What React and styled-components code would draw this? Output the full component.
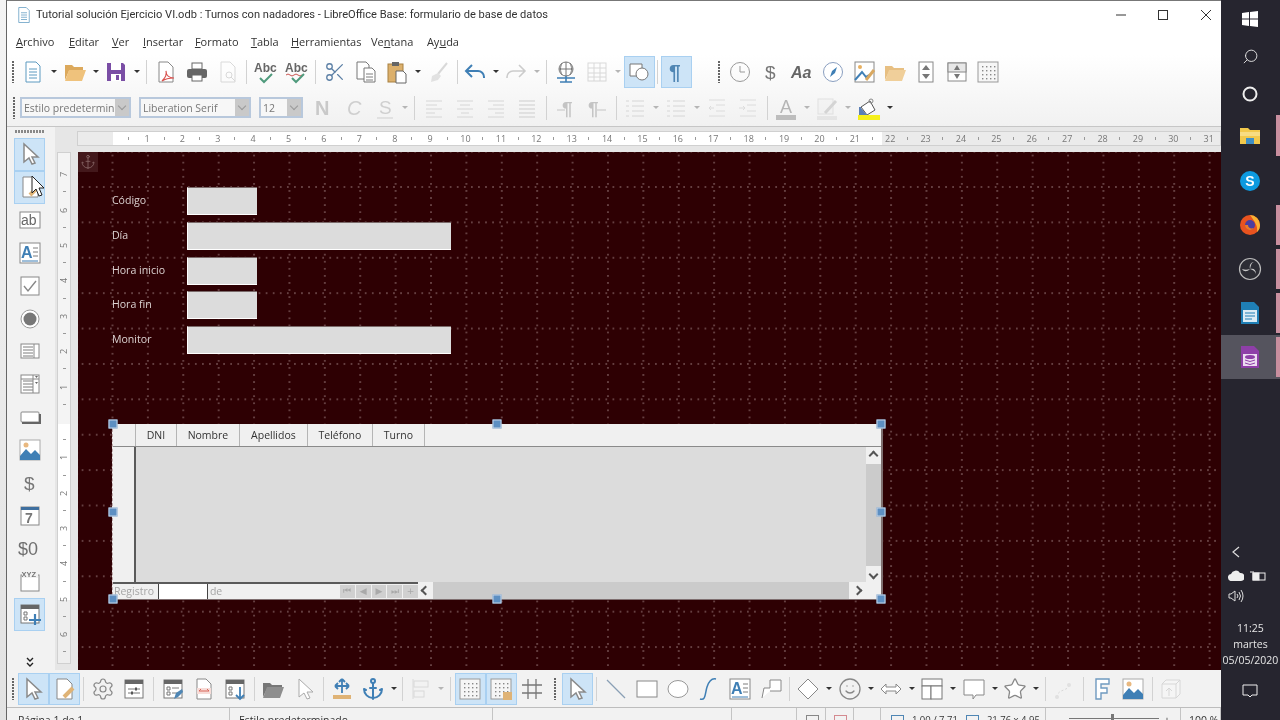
import React from "react";
import styled, { createGlobalStyle } from "styled-components";
import { Settings, Smile, Star, Scissors, Anchor, Search } from "lucide-react";

const Global = createGlobalStyle`
  html, body { margin: 0; padding: 0; background: #f2f2f2; }
  body { font-family: "Open Sans", "Liberation Sans", sans-serif; color: #333; }
`;

const G = "#7d7d7d";
const B = "#3f7fb5";
const T = { fontFamily: "Liberation Sans, sans-serif" };
const PALE = "#d6d6d6";

const lines = (x1, x2, ys, c = G) => ys.map((y) => <path key={y} d={`M${x1} ${y}H${x2}`} stroke={c} />);
const rows = (spans, c = PALE) => spans.map(([a, b], i) => <path key={i} d={`M${a} ${5 + i * 4}H${b}`} stroke={c} />);
const dots = (c = "#888") => {
  const out = [];
  for (let x = 6; x < 20; x += 4) for (let y = 6; y < 20; y += 4) out.push(<rect key={`${x}${y}`} x={x} y={y} width="1.4" height="1.4" fill={c} />);
  return out;
};
const win = (c = "#777") => (
  <>
    <rect x="3" y="3" width="18" height="18" fill="#fff" stroke={c} />
    <rect x="3" y="3" width="18" height="4" fill="#666" />
  </>
);

const icons = {
  new: <><path d="M5 2h10l4 4v16H5z" fill="#fff" stroke="#5d9ac0" />{lines(8, 16, [9, 12, 15, 18], "#5d9ac0")}</>,
  open: <><path d="M2 5h7l2 2h9v4H6l-4 9z" fill="#dca95c" /><path d="M6 10h17l-4 11H2z" fill="#efc27c" /></>,
  save: <><path d="M3 3h16l2 2v16H3z" fill="#7a4ea5" /><rect x="7" y="3" width="10" height="7" fill="#fff" /><rect x="7" y="14" width="10" height="7" fill="#fff" /><rect x="12" y="15" width="3" height="5" fill="#7a4ea5" /></>,
  pdf: <><path d="M5 2h9l5 5v15H5z" fill="#fff" stroke="#888" /><path d="M8 21c3-3 5-7 4-10 0 4 3 7 8 7-5 0-9 1-12 3z" stroke="#d9534f" strokeWidth="1.2" /></>,
  print: <><rect x="7" y="3" width="10" height="6" fill="#fff" stroke="#666" /><rect x="2" y="9" width="20" height="9" rx="2" fill="#666" /><rect x="7" y="15" width="10" height="6" fill="#fff" stroke="#666" /></>,
  preview: <g opacity=".35"><path d="M5 2h9l5 5v15H5z" fill="#fff" stroke="#999" /><circle cx="13" cy="15" r="3" stroke="#999" /><path d="M15 17l4 4" stroke="#999" /></g>,
  abc: <><text x="1" y="12" fontSize="12" fontWeight="700" fill="#666" style={T}>Abc</text><path d="M7 18l4 4 8-8" stroke="#4f9a7c" strokeWidth="2" /></>,
  abc2: <><text x="1" y="12" fontSize="12" fontWeight="700" fill="#666" style={T}>Abc</text><path d="M2 15q2-2 4 0t4 0 4 0 4 0" stroke="#c9534f" /><path d="M8 18l4 4 8-8" stroke="#4f9a7c" strokeWidth="2" /></>,
  cut: <Scissors x="1" y="1" width="22" height="22" color="#5b7fa5" strokeWidth="1.4" transform="rotate(0)" />,
  copy: <><path d="M3 2h9l3 3v14H3z" fill="#fff" stroke="#777" /><path d="M10 8h8l3 3v11H10z" fill="#fff" stroke="#777" />{lines(12, 19, [14, 17, 20])}</>,
  paste: <><rect x="3" y="4" width="15" height="18" fill="#dcb06c" stroke="#a88040" /><rect x="7" y="2" width="7" height="4" fill="#666" /><path d="M11 11h7l3 3v9H11z" fill="#fff" stroke="#666" /></>,
  brush: <g opacity=".3"><path d="M20 3l-9 11" stroke="#888" strokeWidth="2" /><path d="M11 13l-6 3-1 6 7-2 3-4z" fill="#aaa" /></g>,
  undo: <path d="M9 5L3 11l6 6M3 11h12a6 6 0 0 1 6 6v1" stroke={B} strokeWidth="2" />,
  redo: <path d="M15 5l6 6-6 6M21 11H9a6 6 0 0 0-6 6v1" stroke="#ccc" strokeWidth="1.6" />,
  globe: <><circle cx="12" cy="9" r="7" fill="#fff" stroke="#777" /><path d="M5 9h14M12 2v14M8 3c-2 4-2 8 0 12M16 3c2 4 2 8 0 12" stroke="#777" /><path d="M3 18h18M6 22h12M12 16v6" stroke={B} strokeWidth="1.6" /></>,
  table: <g opacity=".3"><rect x="3" y="3" width="18" height="18" fill="#fff" stroke="#888" /><path d="M3 8h18M3 13h18M3 17h18M9 3v18M15 3v18" stroke="#888" /></g>,
  shapes: <><path d="M3 4h12v12H3z" fill="#fff" stroke="#777" /><circle cx="15" cy="14" r="6" fill="#fff" stroke="#777" /></>,
  para: <text x="5" y="19" fontSize="21" fontWeight="700" fill="#4f86b4" style={T}>¶</text>,
  clock: <><circle cx="12" cy="12" r="9.5" stroke="#999" /><path d="M12 6v6h5" stroke="#999" /></>,
  dollar: <text x="6" y="19" fontSize="19" fill="#777" style={T}>$</text>,
  aa: <text x="1" y="18" fontSize="16" fontStyle="italic" fontWeight="700" fill="#666" style={T}>Aa</text>,
  compass: <><circle cx="12" cy="12" r="9.5" fill="#fff" stroke="#8a9fc0" /><path d="M16 7l-2 6-5 4 2-6z" fill={B} /></>,
  imagePen: <><rect x="3" y="2" width="19" height="20" fill="#fff" stroke="#888" /><circle cx="8" cy="7" r="2" fill="#e8b060" /><path d="M3 20l7-8 4 5 3-2" stroke={B} strokeWidth="2" /><path d="M22 10l-8 10" stroke="#d9a860" strokeWidth="3" /></>,
  folder: <><path d="M2 6h7l2 2h10v4H6l-4 8z" fill="#e7bf82" /><path d="M6 10h17l-4 11H2z" fill="#f0cf9a" /></>,
  spin: <><rect x="5" y="2" width="14" height="20" fill="#fff" stroke="#888" /><path d="M12 5l4 5H8zM12 19l-4-5h8z" fill="#777" /></>,
  spin2: <><rect x="3" y="3" width="18" height="18" fill="#fff" stroke="#888" /><rect x="3" y="3" width="18" height="9" fill="#e8e8e8" stroke="#888" /><path d="M12 5l3 5H9zM12 19l-3-5h6z" fill="#777" /></>,
  dotGrid: <><rect x="2" y="2" width="20" height="20" fill="#f6f6f6" stroke="#999" />{dots()}</>,
  bigN: <text x="4" y="19" fontSize="20" fontWeight="700" fill="#c9c9c9" style={T}>N</text>,
  bigC: <text x="5" y="19" fontSize="20" fontStyle="italic" fill="#cfcfcf" style={T}>C</text>,
  bigS: <><text x="6" y="18" fontSize="19" fill="#cfcfcf" style={T}>S</text><path d="M4 22h16" stroke="#cfcfcf" /></>,
  alignL: rows([[4, 20], [4, 15], [4, 20], [4, 13], [4, 20]]),
  alignC: rows([[4, 20], [7, 17], [4, 20], [8, 16], [4, 20]]),
  alignR: rows([[4, 20], [9, 20], [4, 20], [11, 20], [4, 20]]),
  alignJ: rows([[4, 20], [4, 20], [4, 20], [4, 20], [4, 20]], "#cdcdcd"),
  paraR: <><text x="8" y="19" fontSize="19" fontWeight="700" fill="#c4c4c4" style={T}>¶</text><path d="M3 14h8" stroke="#c4c4c4" /></>,
  paraL: <><text x="3" y="19" fontSize="19" fontWeight="700" fill="#c4c4c4" style={T}>¶</text><path d="M12 14h9" stroke="#c4c4c4" /></>,
  list: <>{lines(9, 21, [5, 10, 15, 20], PALE)}{lines(3, 6, [5, 10, 15, 20], PALE)}</>,
  indent: <>{lines(4, 20, [4, 20], "#dcdcdc")}{lines(11, 20, [9, 15], "#dcdcdc")}<path d="M9 12H4l2-2M4 12l2 2" stroke="#dcdcdc" /></>,
  indent2: <>{lines(4, 20, [4, 20], "#dcdcdc")}{lines(11, 20, [9, 15], "#dcdcdc")}<path d="M3 12h6l-2-2M9 12l-2 2" stroke="#dcdcdc" /></>,
  fontColor: <><text x="6" y="17" fontSize="18" fill="#b5b5b5" style={T}>A</text><rect x="2" y="19" width="20" height="5" fill="#bdbdbd" /></>,
  pencil: <g opacity=".35"><rect x="3" y="3" width="15" height="15" fill="#eee" stroke="#bbb" /><path d="M21 5L10 17" stroke="#999" strokeWidth="3" /><rect x="2" y="20" width="20" height="4" fill="#ccc" /></g>,
  fill: <><path d="M4 11l9-6 5 9-8 5z" fill="#fff" stroke="#555" /><path d="M3 11v8h7" fill="#5b7fb5" stroke="#5b7fb5" strokeWidth="2" /><circle cx="14" cy="5" r="2" stroke="#888" /><rect x="1" y="19" width="22" height="5" fill="#f5ef1a" /></>,
  arrow: <path d="M6 2v18l5-4 3 6 3-1-3-6h6z" fill="#fff" stroke="#8a8a8a" strokeWidth="1.5" />,
  design: <><path d="M5 2h10l5 5v15H5z" fill="#fff" stroke="#888" /><path d="M21 11l-9 9" stroke="#dfb376" strokeWidth="4" /></>,
  props: <><rect x="3" y="3" width="18" height="18" fill="#fff" stroke="#777" /><rect x="3" y="3" width="18" height="4" fill="#666" /><path d="M6 12h12M6 16h12" stroke="#777" /><rect x="13" y="10.5" width="2" height="3" fill="#555" /><rect x="9" y="14.5" width="2" height="3" fill="#555" /></>,
  formNav: <>{win()}{lines(11, 18, [11, 16])}<path d="M6 10h3v3H6zM6 15h3v3H6z" stroke="#777" /><path d="M13 22l2-6 6-4 1 3-5 5z" fill="#4f86b4" /></>,
  docRed: <><path d="M5 2h9l5 5v15H5z" fill="#fff" stroke="#888" /><path d="M5 11h14v6H5z" fill="#f7dcd8" /><path d="M7 14h10M7 14l2-2M17 14l-2-2" stroke="#d9665a" /></>,
  winDown: <>{win()}<path d="M6 10h3v3H6zM6 15h3v3H6z" stroke="#777" /><path d="M17 10v12M13 18l4 4 4-4" stroke={B} strokeWidth="1.8" /></>,
  folderGray: <><path d="M2 6h7l2 2h10v4H6l-4 8z" fill="#777" /><path d="M6 10h17l-4 11H2z" fill="#8e8e8e" /></>,
  arrowPale: <path d="M7 2v18l5-4 3 6 3-1-3-6h6z" fill="#fff" stroke="#aaa" />,
  move: <><path d="M12 2v14M5 9h14M12 2l-3 3M12 2l3 3M5 9l3-3M5 9l3 3M19 9l-3-3M19 9l-3 3" stroke={B} strokeWidth="1.8" /><rect x="3" y="18" width="18" height="4" fill="#dfb376" /></>,
  anchor: <Anchor x="0" y="0" width="24" height="24" color={B} strokeWidth="2" />,
  alignObj: <g opacity=".35"><path d="M5 2v20" stroke="#aaa" /><rect x="6" y="4" width="14" height="6" stroke="#aaa" /><rect x="6" y="14" width="10" height="6" stroke="#aaa" /></g>,
  gridLock: <><rect x="2" y="2" width="20" height="20" fill="#f6f6f6" stroke="#999" />{dots()}<rect x="14" y="15" width="9" height="8" fill="#dfb376" /></>,
  hash: <path d="M8 2v20M16 2v20M2 8h20M2 16h20" stroke="#777" strokeWidth="1.3" />,
  line: <path d="M3 3l18 18" stroke="#8a9fb5" strokeWidth="1.2" />,
  rect: <rect x="2" y="4" width="20" height="16" fill="#fff" stroke="#888" />,
  ellipse: <ellipse cx="12" cy="12" rx="10" ry="8.5" fill="#fff" stroke="#999" />,
  curve: <path d="M3 22c6 2 5-6 7-12s5-9 9-8" stroke={B} strokeWidth="1.5" />,
  textBox: <><rect x="2" y="2" width="20" height="20" fill="#fff" stroke="#888" /><text x="3" y="17" fontSize="16" fontWeight="700" fill={B} style={T}>A</text>{lines(15, 20, [7, 11, 15])}<path d="M4 20h16" stroke={B} /></>,
  poly: <path d="M3 21l2-10h6V3h11v11H11" fill="#fff" stroke="#888" />,
  diamond: <path d="M12 2l10 10-10 10L2 12z" fill="#fff" stroke="#888" />,
  smile: <Smile x="0" y="0" width="24" height="24" color="#888" strokeWidth="1.3" />,
  dbl: <path d="M2 12l5-5v3h10V7l5 5-5 5v-3H7v3z" fill="#fff" stroke="#888" />,
  flow: <><rect x="2" y="2" width="20" height="7" fill="#fff" stroke="#777" /><rect x="2" y="9" width="9" height="13" fill="#fff" stroke="#777" /><rect x="11" y="9" width="11" height="13" fill="#fff" stroke="#777" /></>,
  callout: <path d="M2 3h20v15h-8l-3 4v-4H2z" fill="#fff" stroke="#888" />,
  star: <Star x="0" y="0" width="24" height="24" color="#888" fill="#fff" strokeWidth="1.3" />,
  points: <g opacity=".3"><path d="M5 20c0-8 12-6 12-12" stroke="#999" strokeDasharray="2 2" /><circle cx="5" cy="20" r="2" fill="#bbb" /><circle cx="17" cy="8" r="2" fill="#bbb" /></g>,
  fontwork: <path d="M6 2h13v5h-8v4h6v5h-6v6H6z" fill="#fff" stroke="#6f9ac0" strokeWidth="1.4" />,
  image: <><rect x="2" y="2" width="20" height="20" fill="#fff" stroke="#aaa" /><circle cx="8" cy="7" r="2.5" fill="#e8b880" /><path d="M2 22v-4l6-7 5 5 4-4 5 5v5z" fill="#3f7fb5" /></>,
  box3d: <g opacity=".3"><path d="M3 7l4-4h14v14l-4 4H3z" fill="#fff" stroke="#999" /><path d="M3 7h14v14M17 7l4-4" stroke="#999" /><path d="M10 19v-8l-3 3M10 11l3 3" stroke="#999" /></g>,
  gear: <Settings x="0" y="0" width="24" height="24" color="#888" strokeWidth="1.2" />,
  textField: <><rect x="2" y="4" width="20" height="16" fill="#fff" stroke="#888" /><text x="3" y="17" fontSize="14" fill="#666" style={T}>ab</text></>,
  check: <><rect x="3" y="3" width="18" height="18" fill="#fff" stroke="#888" /><path d="M6 12l4 5 8-10" stroke="#888" strokeWidth="1.4" /></>,
  radio: <><circle cx="12" cy="12" r="9" fill="#fff" stroke="#999" /><circle cx="12" cy="12" r="6.5" fill="#777" /></>,
  listBox: <><rect x="3" y="5" width="18" height="14" fill="#fff" stroke="#888" />{lines(5, 15, [8, 11, 14, 17])}<path d="M16 5v14" stroke="#888" /></>,
  combo: <><rect x="3" y="3" width="18" height="18" fill="#fff" stroke="#888" />{lines(5, 15, [9, 12, 15, 18])}<path d="M15 3v18M3 7h18" stroke="#888" /><path d="M17 4h3l-1.5 2zM17 10h3l-1.5 2z" fill="#666" /></>,
  button: <><rect x="3" y="7" width="18" height="10" rx="1" fill="#fff" stroke="#888" /><path d="M4 18h18V9" stroke="#666" strokeWidth="2" /></>,
  date: <><rect x="3" y="3" width="18" height="18" fill="#fff" stroke="#888" /><rect x="3" y="3" width="18" height="3" fill="#3f6f9f" /><text x="7" y="19" fontSize="14" fontWeight="700" fill="#777" style={T}>7</text></>,
  currency: <text x="0" y="18" fontSize="18" fill="#6f6f6f" style={T}>$0</text>,
  xyz: <><rect x="3" y="6" width="18" height="16" fill="#fff" stroke="#888" /><rect x="4" y="2" width="16" height="7" fill="#f2f2f2" /><text x="3.5" y="8" fontSize="7.5" fontWeight="700" fill="#777" style={T}>XYZ</text></>,
  tablePlus: <>{win()}<path d="M6 10h3v3H6zM6 15h3v3H6z" stroke="#777" /><path d="M17 12v11M11 18h12" stroke={B} strokeWidth="2.2" /></>,
  anchorSmall: <Anchor x="0" y="0" width="24" height="24" color="#8a6a6a" strokeWidth="1.2" />
};

const IconSvg = styled.svg`
  overflow: visible;
`;

const Ico = ({ name, size = 24 }) => (
  <IconSvg width={size} height={size} viewBox="0 0 24 24" fill="none" strokeWidth="1">{icons[name]}</IconSvg>
);

const dd = (w = 11, faded) => ({ drop: 1, w, faded });
const t = (name, extra) => ({ name, ...extra });

const topTools = [
  t("new"), dd(), t("open"), dd(10), t("save"), dd(10), { sep: 1, w: 9 }, t("pdf"), t("print"), t("preview"), { sep: 1, w: 6 },
  t("abc"), t("abc2"), { sep: 1, w: 8 }, t("cut"), t("copy"), t("paste"), dd(), t("brush"), { sep: 1, w: 5 },
  t("undo"), dd(10), t("redo"), dd(11, true), { sep: 1, w: 8 }, t("globe"), t("table"), dd(11, true), t("shapes", { on: true }), { sep: 1, w: 6 }, t("para", { on: true }),
  { gap: 22 }, { grip: 1, w: 11 }, t("clock"), t("dollar"), t("aa"), t("compass"), t("imagePen"), t("folder"), t("spin"), t("spin2"), t("dotGrid")
];

const formatTools = [
  t("bigN"), t("bigC"), t("bigS"), dd(9, true), { sep: 1, w: 9 }, t("alignL"), t("alignC"), t("alignR"), t("alignJ"), { sep: 1, w: 8 },
  t("paraR"), t("paraL"), { sep: 1, w: 7 }, t("list"), dd(10, true), t("list"), dd(10, true), t("indent"), t("indent2"), { sep: 1, w: 7 },
  t("fontColor"), dd(10, true), t("pencil"), dd(11, true), t("fill"), dd(10)
];

const bottomTools = [
  t("arrow", { on: true }), t("design", { on: true }), { sep: 1, w: 8 }, t("gear"), t("props"), { sep: 1, w: 8 }, t("formNav"), t("docRed"), t("winDown"), { sep: 1, w: 7 },
  t("folderGray"), t("arrowPale"), { sep: 1, w: 7 }, t("move"), t("anchor"), dd(), { sep: 1, w: 5 }, t("alignObj"), dd(11, true), { sep: 1, w: 8 },
  t("dotGrid", { on: true }), t("gridLock", { on: true }), t("hash"), { grip: 1, w: 14 }, t("arrow", { on: true }), { sep: 1, w: 8 },
  t("line"), t("rect"), t("ellipse"), t("curve"), t("textBox"), t("poly"), { sep: 1, w: 6 }, t("diamond"), dd(11), t("smile"), dd(10), t("dbl"), dd(10),
  t("flow"), dd(11), t("callout"), dd(10), t("star"), dd(11), { sep: 1, w: 7 }, t("points"), { sep: 1, w: 7 }, t("fontwork"), t("image"), { sep: 1, w: 7 }, t("box3d")
];

const sideTools = [
  t("arrow", { on: true }), t("design", { on: true }), t("textField"), t("textBox"), t("check"), t("radio"), t("listBox"), t("combo"),
  t("button"), t("image"), t("dollar"), t("date"), t("currency"), t("xyz"), t("tablePlus", { on: true })
];

const Toolbar = ({ items }) =>
  items.map((it, i) => {
    if (it.sep) return <Sep key={i} $w={it.w} />;
    if (it.drop) return <Drop key={i} $w={it.w} $faded={it.faded} />;
    if (it.grip) return <Grip key={i} $w={it.w} />;
    if (it.gap) return <Gap key={i} $w={it.gap} />;
    return <Tool key={i} $on={it.on}><Ico name={it.name} /></Tool>;
  });

const menu = [
  ["A", "rchivo", 53], ["E", "ditar", 43], ["V", "er", 31], ["I", "nsertar", 52], ["F", "ormato", 56], ["T", "abla", 40],
  ["H", "erramientas", 80]
];

const hCells = Array.from({ length: 32 }, (_, i) => i);
const vCells = [7, 6, 5, 4, 3, 2, 1, "", 1, 2, 3, 4, 5, 6];

const Page = styled.div`
  display: flex;
  width: 1280px;
  height: 720px;
  overflow: hidden;
  filter: blur(0.35px);
`;

const DeskStrip = styled.div`
  width: 6px;
  background: linear-gradient(#f4f4f4 0, #e2e2e2 100%);
  border-right: 1px solid #666;
`;

const Window = styled.div`
  width: 1214px;
  display: flex;
  flex-direction: column;
  background: #fff;
`;

const TitleBar = styled.div`
  box-sizing: border-box;
  height: 30px;
  border-top: 1px solid #777;
  padding: 0 0 2px 8px;
  display: flex;
  align-items: center;
  gap: 12.5px;
  font-family: Roboto, "Liberation Sans", sans-serif;
  font-size: 11.1px;
  color: #333;
`;

const TitleText = styled.span`
  margin-left: -9.5px;
  flex: 1;
`;

const WinButton = styled.span`
  width: 30px;
  display: flex;
  justify-content: center;
`;

const MenuBar = styled.div`
  box-sizing: border-box;
  height: 25px;
  padding: 0 0 2px 9px;
  display: flex;
  align-items: center;
  font-size: 11px;
`;

const MenuItem = styled.span`
  width: ${(p) => p.$w}px;
  flex-shrink: 0;
`;

const ToolRow = styled.div`
  box-sizing: border-box;
  height: ${(p) => p.$h}px;
  display: flex;
  align-items: center;
  padding: ${(p) => p.$pt || 0}px 0 0 ${(p) => p.$pad}px;
  background: ${(p) => p.$bg || "transparent"};
`;

const HeadTools = styled.div`
  background: linear-gradient(#fff 0, #f1f1f1 100%);
  border-bottom: 1px solid #c6c6c6;
  display: flex;
  flex-direction: column;
`;

const Tool = styled.span`
  box-sizing: border-box;
  flex: 0 0 31px;
  height: 32px;
  display: flex;
  align-items: center;
  justify-content: center;
  background: ${(p) => (p.$on ? "#cde4f7" : "transparent")};
  border: 1px solid ${(p) => (p.$on ? "#a9d0f1" : "transparent")};
`;

const Sep = styled.span`
  flex: 0 0 ${(p) => p.$w}px;
  height: 24px;
  display: flex;
  justify-content: center;
  &::before {
    content: "";
    width: 1px;
    background: #d2d2d2;
  }
`;

const Drop = styled.span`
  flex: 0 0 ${(p) => p.$w}px;
  display: flex;
  justify-content: center;
  &::before {
    content: "";
    border-left: 3px solid transparent;
    border-right: 3px solid transparent;
    border-top: 3px solid ${(p) => (p.$faded ? "#b5b5b5" : "#333")};
  }
`;

const Grip = styled.span`
  flex: 0 0 ${(p) => p.$w}px;
  height: 22px;
  display: flex;
  justify-content: center;
  &::before {
    content: "";
    width: 2px;
    background: repeating-linear-gradient(#666 0 2px, transparent 2px 3px);
  }
`;

const Gap = styled.span`
  flex: 0 0 ${(p) => p.$w}px;
`;

const Combo = styled.span`
  box-sizing: border-box;
  flex: 0 0 ${(p) => p.$w}px;
  height: 21px;
  margin-right: ${(p) => p.$mr}px;
  border: 2px solid #b8c8dc;
  background: #f7f7f7;
  display: flex;
  align-items: center;
  font-size: 10.5px;
  color: #777;
  overflow: hidden;
  white-space: nowrap;
`;

const ComboText = styled.span`
  flex: 1;
  min-width: 0;
  padding-left: 2px;
  overflow: hidden;
`;

const ComboArrow = styled.span`
  flex: 0 0 14px;
  height: 100%;
  background: #c9c9c9;
  display: flex;
  align-items: center;
  justify-content: center;
  &::before {
    content: "";
    width: 5px;
    height: 5px;
    margin-top: -3px;
    border-right: 1px solid #999;
    border-bottom: 1px solid #999;
    transform: rotate(45deg);
  }
`;

const Workspace = styled.div`
  flex: 1;
  display: flex;
  min-height: 0;
`;

const Sidebar = styled.div`
  position: relative;
  width: 48px;
  background: #f2f2f2;
  display: flex;
  flex-direction: column;
  align-items: center;
  padding: 3px 2px 0 0;
  box-sizing: border-box;
`;

const SideGrip = styled.span`
  width: 30px;
  height: 3px;
  margin-bottom: 5px;
  background: repeating-linear-gradient(90deg, #888 0 2px, transparent 2px 3px);
`;

const SideTool = styled.span`
  box-sizing: border-box;
  width: 31px;
  height: 32.85px;
  flex-shrink: 0;
  display: flex;
  align-items: center;
  justify-content: center;
  background: ${(p) => (p.$on ? "#cde4f7" : "transparent")};
  border: 1px solid ${(p) => (p.$on ? "#a9d0f1" : "transparent")};
`;

const More = styled.svg`
  margin-top: auto;
  margin-bottom: 3px;
`;

const MouseCursor = styled.svg`
  position: absolute;
  left: 24px;
  top: 48px;
`;

const RulerArea = styled.div`
  flex: 1;
  display: flex;
  flex-direction: column;
  min-width: 0;
  background: #e6e6e6;
`;

const TopRulerRow = styled.div`
  height: 25px;
  padding: 4px 0 0 22px;
  box-sizing: border-box;
`;

const TopRuler = styled.div`
  height: 15px;
  display: flex;
  padding-left: 17px;
  overflow: hidden;
  box-shadow: inset 0 0 0 1px #d0d0d0;
  background: linear-gradient(90deg, #ebebeb 36px, #fff 36px, #fff 805px, #ebebeb 805px);
`;

const HCell = styled.span`
  position: relative;
  flex: 0 0 35.4px;
  text-align: center;
  font-size: 9px;
  line-height: 15px;
  color: #777;
  &::after {
    content: "";
    position: absolute;
    right: 0;
    top: 6px;
    width: 1px;
    height: 3px;
    background: #999;
  }
`;

const CanvasRow = styled.div`
  flex: 1;
  display: flex;
  min-height: 0;
`;

const VRulerSlot = styled.div`
  flex: 0 0 23px;
  box-sizing: border-box;
  padding: 0 7px 6px 2px;
`;

const VRuler = styled.div`
  height: 100%;
  padding-top: 5px;
  box-sizing: border-box;
  box-shadow: inset 0 0 0 1px #d0d0d0;
  overflow: hidden;
  background: linear-gradient(#f4f4f4 272px, #fff 272px, #fff 448px, #eeeeee 448px);
`;

const VCell = styled.span`
  position: relative;
  display: flex;
  height: 35.4px;
  align-items: center;
  justify-content: center;
  font-size: 9px;
  color: #777;
  & > b {
    font-weight: 400;
    transform: rotate(-90deg);
  }
  &::after {
    content: "";
    position: absolute;
    bottom: 0;
    left: 6px;
    width: 3px;
    height: 1px;
    background: #999;
  }
`;

const Canvas = styled.div`
  position: relative;
  flex: 1;
  overflow: hidden;
  padding: 35px 0 0 34px;
  background-color: #2e0003;
  background-image:
    radial-gradient(circle, rgba(225, 205, 205, 0.45) 0.55px, transparent 0.9px),
    radial-gradient(circle, rgba(225, 205, 205, 0.45) 0.55px, transparent 0.9px);
  background-size: 7.08px 35.4px, 35.4px 7.08px;
  background-position: 1px 17.3px, 16.8px 0;
`;

const AnchorMark = styled.span`
  position: absolute;
  left: 0;
  top: 0;
  width: 20px;
  height: 20px;
  background: #43181b;
  display: flex;
  align-items: center;
  justify-content: center;
`;

const FieldList = styled.div`
  display: flex;
  flex-direction: column;
  gap: 6.8px;
`;

const FieldRow = styled.div`
  display: flex;
  align-items: center;
`;

const FieldLabel = styled.label`
  flex: 0 0 75px;
  font-size: 10.6px;
  color: #dcd2d2;
  margin-bottom: 2px;
`;

const Field = styled.span`
  box-sizing: border-box;
  width: ${(p) => p.$w}px;
  height: 28px;
  background: #dcdcdc;
  border-left: 1px solid #fff;
  border-bottom: 1px solid #fff;
  border-top: 1px solid #7a6a6a;
`;

const GridControl = styled.div`
  position: relative;
  box-sizing: border-box;
  margin-top: 70px;
  width: 771px;
  height: 176px;
  background: #f0f0f0;
  border-left: 1px dashed #bda9a9;
  border-right: 2px solid #7f6f70;
  border-bottom: 1px solid #7f6f70;
  display: flex;
  flex-direction: column;
`;

const Handle = styled.span`
  position: absolute;
  left: ${(p) => p.$x};
  top: ${(p) => p.$y};
  width: 7px;
  height: 7px;
  transform: translate(-50%, -50%);
  background: #5d8fc2;
  border: 1px solid #c6d4e6;
`;

const GridHead = styled.div`
  flex: 0 0 20px;
  display: flex;
  border-bottom: 1px solid #8a8a8a;
`;

const HeadCell = styled.span`
  box-sizing: border-box;
  flex: 0 0 ${(p) => p.$w}px;
  border-right: 1px solid #b5b5b5;
  text-align: center;
  font-size: 10.5px;
  line-height: 22px;
  color: #333;
`;

const GridBody = styled.div`
  flex: 1;
  display: flex;
  min-height: 0;
`;

const RowHeader = styled.div`
  box-sizing: border-box;
  flex: 0 0 23px;
  border-right: 2px solid #5a5a5a;
`;

const DataArea = styled.div`
  flex: 1;
  background: #dcdcdc;
`;

const VScroll = styled.div`
  flex: 0 0 15px;
  display: flex;
  flex-direction: column;
  align-items: stretch;
`;

const Track = styled.div`
  flex: 1;
  background: #cbcbcb;
`;

const ScrollBtn = styled.span`
  flex: 0 0 ${(p) => p.$size}px;
  display: flex;
  align-items: center;
  justify-content: center;
  &::before {
    content: "";
    width: 5px;
    height: 5px;
    border-left: 2px solid #555;
    border-top: 2px solid #555;
    transform: rotate(${(p) => p.$deg}deg);
  }
`;

const GridFoot = styled.div`
  flex: 0 0 17px;
  display: flex;
`;

const RecordBar = styled.div`
  box-sizing: border-box;
  flex: 0 0 305px;
  display: flex;
  align-items: stretch;
  border-top: 2px solid #5a5a5a;
  font-size: 10.5px;
  color: #a5a5a5;
  line-height: 15px;
`;

const RecordLabel = styled.span`
  flex: 0 0 45px;
  box-sizing: border-box;
  padding-left: 1px;
  overflow: hidden;
`;

const RecordInput = styled.span`
  flex: 0 0 50px;
  box-sizing: border-box;
  background: #fff;
  border-left: 1px solid #444;
  border-right: 1px solid #444;
`;

const RecordOf = styled.span`
  flex: 1;
  padding-left: 2px;
`;

const NavButtons = styled.span`
  flex: 0 0 78px;
  display: flex;
  gap: 1px;
  padding: 1px 0 1px 0;
  box-sizing: border-box;
`;

const NavButton = styled.span`
  flex: 1;
  background: #d0d0d0;
  color: #a9a9a9;
  font-size: 9px;
  line-height: 13px;
  text-align: center;
  font-family: "DejaVu Sans", sans-serif;
`;

const HScroll = styled.div`
  flex: 1;
  display: flex;
`;

const Taskbar = styled.div`
  width: 60px;
  background: #26252f;
  display: flex;
  flex-direction: column;
  align-items: center;
  color: #e6e6e6;
`;

const TaskItem = styled.span`
  position: relative;
  box-sizing: border-box;
  width: 100%;
  height: ${(p) => p.$h}px;
  flex-shrink: 0;
  display: flex;
  align-items: center;
  justify-content: center;
  background: ${(p) => (p.$on ? "#55545e" : "transparent")};
  &::after {
    content: "";
    display: ${(p) => (p.$mark ? "block" : "none")};
    position: absolute;
    right: 0;
    top: 2px;
    bottom: 2px;
    width: 4px;
    background: #c98f9f;
  }
`;

const Tray = styled.div`
  margin-top: auto;
  width: 100%;
  display: flex;
  flex-direction: column;
  align-items: center;
  font-size: 10.5px;
`;

const TrayIcons = styled.div`
  display: grid;
  grid-template-columns: 22px 22px;
  gap: 4px 0;
  justify-items: center;
  align-items: center;
  margin-left: -2px;
  width: 100%;
  padding-left: 5px;
  box-sizing: border-box;
`;

const Clock = styled.div`
  margin-top: 17px;
  text-align: center;
  line-height: 16px;
  font-size: 10.5px;
  white-space: nowrap;
`;

const Notify = styled.span`
  height: 48px;
  margin-top: 4px;
  padding-top: 12px;
  box-sizing: border-box;
  display: flex;
  align-items: flex-start;
`;

const StatusBar = styled.div`
  height: 13px;
  flex-shrink: 0;
  border-top: 1px solid #bdbdbd;
  box-sizing: border-box;
  background: #f2f2f2;
  display: flex;
  overflow: hidden;
  font-size: 10.5px;
  line-height: 14px;
  color: #333;
`;

const StatusCell = styled.span`
  box-sizing: border-box;
  flex: ${(p) => (p.$w ? `0 0 ${p.$w}px` : "1")};
  min-width: 0;
  overflow: hidden;
  padding: 5px 0 0 ${(p) => p.$pad ?? 9}px;
  border-right: 1px solid #c4c4c4;
  white-space: nowrap;
  display: flex;
  gap: ${(p) => p.$gap ?? 5}px;
  align-items: flex-start;
  font-size: ${(p) => p.$fs || 10.5}px;
`;

const ZoomSlider = styled.span`
  position: relative;
  flex-shrink: 0;
  width: 90px;
  height: 1px;
  margin-top: 5px;
  background: #777;
  &::after {
    content: "";
    position: absolute;
    left: 42px;
    top: -4px;
    width: 3px;
    height: 9px;
    background: #777;
  }
`;

const MiniBox = styled.span`
  flex-shrink: 0;
  width: 11px;
  height: 8px;
  margin-top: 2px;
  border: 1px solid ${(p) => p.$c || "#4f86b4"};
`;

const BottomDock = styled.div`
  display: flex;
  flex-direction: column;
`;

export default function App() {
  return (
    <Page>
      <Global />
      <DeskStrip />
      <Window>
        <TitleBar>
          <Ico name="new" size={18} />
          <TitleText>Tutorial solución Ejercicio VI.odb : Turnos con nadadores - LibreOffice Base: formulario de base de datos</TitleText>
          <WinButton>
            <svg width="12" height="12" viewBox="0 0 12 12" stroke="#333" fill="none"><path d="M1 6h10" /></svg>
          </WinButton>
          <WinButton>
            <svg width="12" height="12" viewBox="0 0 12 12" stroke="#333" fill="none"><rect x="1.5" y="1.5" width="9" height="9" /></svg>
          </WinButton>
          <WinButton>
            <svg width="12" height="12" viewBox="0 0 12 12" stroke="#333" fill="none"><path d="M1 1l10 10M11 1L1 11" /></svg>
          </WinButton>
        </TitleBar>
        <MenuBar>
          {menu.map(([u, rest, w]) => (
            <MenuItem key={u} $w={w}><u>{u}</u>{rest}</MenuItem>
          ))}
          <MenuItem $w={56}>Ve<u>n</u>tana</MenuItem>
          <MenuItem $w={50}>Ay<u>u</u>da</MenuItem>
        </MenuBar>
        <HeadTools>
          <ToolRow $h={33} $pad={2}>
            <Grip $w={9} />
            <Toolbar items={topTools} />
          </ToolRow>
          <ToolRow $h={38} $pad={2} $pt={1}>
            <Grip $w={11} />
            <Combo $w={111} $mr={8}><ComboText>Estilo predeterminado</ComboText><ComboArrow /></Combo>
            <Combo $w={112} $mr={8}><ComboText>Liberation Serif</ComboText><ComboArrow /></Combo>
            <Combo $w={44} $mr={5}><ComboText>12</ComboText><ComboArrow /></Combo>
            <Toolbar items={formatTools} />
          </ToolRow>
        </HeadTools>
        <Workspace>
          <Sidebar>
            <SideGrip />
            {sideTools.map((it) => (
              <SideTool key={it.name} $on={it.on}><Ico name={it.name} /></SideTool>
            ))}
            <More width="8" height="10" viewBox="0 0 8 10" fill="none" stroke="#222" strokeWidth="1.4">
              <path d="M1 1l3 3 3-3M1 6l3 3 3-3" />
            </More>
            <MouseCursor width="14" height="22" viewBox="0 0 14 22">
              <path d="M1 1v17l4-4 3 7 3-1-3-7h5z" fill="#fff" stroke="#222" />
            </MouseCursor>
          </Sidebar>
          <RulerArea>
            <TopRulerRow>
              <TopRuler>
                {hCells.map((n) => (
                  <HCell key={n}>{n || ""}</HCell>
                ))}
              </TopRuler>
            </TopRulerRow>
            <CanvasRow>
              <VRulerSlot>
                <VRuler>
                  {vCells.map((n, i) => (
                    <VCell key={i}><b>{n}</b></VCell>
                  ))}
                </VRuler>
              </VRulerSlot>
              <Canvas>
                <AnchorMark><Ico name="anchorSmall" size={16} /></AnchorMark>
                <FieldList>
                  <FieldRow><FieldLabel>Código</FieldLabel><Field $w={70} /></FieldRow>
                  <FieldRow><FieldLabel>Día</FieldLabel><Field $w={264} /></FieldRow>
                  <FieldRow><FieldLabel>Hora inicio</FieldLabel><Field $w={70} /></FieldRow>
                  <FieldRow><FieldLabel>Hora fin</FieldLabel><Field $w={70} /></FieldRow>
                  <FieldRow><FieldLabel>Monitor</FieldLabel><Field $w={264} /></FieldRow>
                </FieldList>
                <GridControl>
                  <GridHead>
                    <HeadCell $w={23} />
                    <HeadCell $w={41}>DNI</HeadCell>
                    <HeadCell $w={63}>Nombre</HeadCell>
                    <HeadCell $w={68}>Apellidos</HeadCell>
                    <HeadCell $w={65}>Teléfono</HeadCell>
                    <HeadCell $w={52}>Turno</HeadCell>
                  </GridHead>
                  <GridBody>
                    <RowHeader />
                    <DataArea />
                    <VScroll>
                      <ScrollBtn $size={17} $deg={45} />
                      <Track />
                      <ScrollBtn $size={16} $deg={225} />
                    </VScroll>
                  </GridBody>
                  <GridFoot>
                    <RecordBar>
                      <RecordLabel>Registro</RecordLabel>
                      <RecordInput />
                      <RecordOf>de</RecordOf>
                      <NavButtons>
                        {["⏮", "◀", "▶", "⏭", "+"].map((g) => (
                          <NavButton key={g}>{g}</NavButton>
                        ))}
                      </NavButtons>
                    </RecordBar>
                    <HScroll>
                      <ScrollBtn $size={15} $deg={-45} />
                      <Track />
                      <ScrollBtn $size={17} $deg={135} />
                      <Gap $w={15} />
                    </HScroll>
                  </GridFoot>
                  <Handle $x="0" $y="0" />
                  <Handle $x="50%" $y="0" />
                  <Handle $x="100%" $y="0" />
                  <Handle $x="0" $y="50%" />
                  <Handle $x="100%" $y="50%" />
                  <Handle $x="0" $y="100%" />
                  <Handle $x="50%" $y="100%" />
                  <Handle $x="100%" $y="100%" />
                </GridControl>
              </Canvas>
            </CanvasRow>
          </RulerArea>
        </Workspace>
        <BottomDock>
          <ToolRow $h={37} $pad={2} $bg="#f2f2f2">
            <Grip $w={9} />
            <Toolbar items={bottomTools} />
          </ToolRow>
          <StatusBar>
            <StatusCell $w={223} $pad={11}>Página 1 de 1</StatusCell>
            <StatusCell $w={263}>Estilo predeterminado</StatusCell>
            <StatusCell $w={239} />
            <StatusCell $w={65} />
            <StatusCell $w={29}><MiniBox $c="#888" /></StatusCell>
            <StatusCell $w={28} $pad={8}><MiniBox $c="#d48a90" /></StatusCell>
            <StatusCell $w={27} />
            <StatusCell $w={165} $pad={10} $gap={8} $fs={9.5}>
              <MiniBox />1.00 / 7.71<MiniBox />21.76 x 4.95
            </StatusCell>
            <StatusCell $w={135} $pad={12}>−<ZoomSlider />+</StatusCell>
            <StatusCell $pad={8}>100 %</StatusCell>
          </StatusBar>
        </BottomDock>
      </Window>
      <Taskbar>
        <TaskItem $h={37}>
          <svg width="18" height="18" viewBox="0 0 18 18" fill="#fff"><path d="M1 3l7-1v6.5H1zM9 2l8-1v7.5H9zM1 9.5h7V16l-7-1zM9 9.5h8V17l-8-1z" /></svg>
        </TaskItem>
        <TaskItem $h={38}><Search size={17} color="#e6e6e6" strokeWidth={1.3} style={{ transform: "scaleX(-1)" }} /></TaskItem>
        <TaskItem $h={38}>
          <svg width="16" height="16" viewBox="0 0 16 16" fill="none" stroke="#eee" strokeWidth="2"><circle cx="8" cy="8" r="6.5" /></svg>
        </TaskItem>
        <TaskItem $h={45} $mark>
          <svg width="22" height="18" viewBox="0 0 22 18"><path d="M1 1h8l2 2h10v14H1z" fill="#f2c94c" /><path d="M1 5h20v4H1z" fill="#f7dc82" /><path d="M7 11h8v6H7z" fill="#3f8fc5" /></svg>
        </TaskItem>
        <TaskItem $h={45}>
          <svg width="22" height="22" viewBox="0 0 22 22"><circle cx="11" cy="11" r="10" fill="#0d9ae0" /><text x="11" y="16" fontSize="14" fontWeight="700" textAnchor="middle" fill="#fff" style={T}>S</text></svg>
        </TaskItem>
        <TaskItem $h={44} $mark>
          <svg width="22" height="22" viewBox="0 0 22 22"><circle cx="11" cy="11" r="10" fill="#e8531f" /><path d="M11 1a10 10 0 0 1 10 10c0 3-1 5-3 7 1-6-2-10-7-17z" fill="#f9b233" /><circle cx="11" cy="11" r="5" fill="#4a3fa0" /><path d="M6 11a5 5 0 0 0 9 3c-3 1-6 0-6-3z" fill="#ee7b22" /></svg>
        </TaskItem>
        <TaskItem $h={44} $mark>
          <svg width="24" height="24" viewBox="0 0 24 24" fill="none"><circle cx="12" cy="12" r="10.5" stroke="#bbb" strokeWidth="1.2" fill="#2c2c34" /><path d="M12 12c-1-4 1-7 4-7-3 1-3 4-4 7zM12 12c4-1 6 1 6 5-1-3-3-4-6-5zM12 12c-3 3-6 3-8 0 3 1 5 1 8 0z" fill="#c8c8c8" /></svg>
        </TaskItem>
        <TaskItem $h={44} $mark>
          <svg width="20" height="24" viewBox="0 0 20 24"><path d="M1 1h13l5 5v17H1z" fill="#1f7fb5" /><path d="M3 9h14v12H3z" fill="#dcecf5" /><path d="M5 12h10M5 15h10M5 18h7" stroke="#1f7fb5" /></svg>
        </TaskItem>
        <TaskItem $h={44} $on $mark>
          <svg width="20" height="24" viewBox="0 0 20 24"><path d="M1 1h13l5 5v17H1z" fill="#8e3fa8" /><path d="M3 9h14v12H3z" fill="#ecdcf2" /><ellipse cx="10" cy="12" rx="5" ry="2" fill="#8e3fa8" /><path d="M5 15q5 3 10 0M5 18q5 3 10 0" stroke="#8e3fa8" fill="none" /></svg>
        </TaskItem>
        <Tray>
          <TrayIcons>
            <svg style={{ gridColumn: "1 / 3", justifySelf: "start", marginLeft: 7, marginBottom: 8 }} width="8" height="12" viewBox="0 0 8 12" fill="none" stroke="#ddd" strokeWidth="1.2"><path d="M7 1L1 6l6 5" /></svg>
            <svg width="16" height="11" viewBox="0 0 16 11" fill="#eee"><path d="M4 11a3.5 3.5 0 0 1-1-7 5 5 0 0 1 9-1 4 4 0 0 1 1 8z" /></svg>
            <svg width="16" height="10" viewBox="0 0 16 10" fill="none" stroke="#eee"><rect x="3" y="2" width="12" height="7" /><rect x="3" y="2" width="6" height="7" fill="#eee" /><path d="M0 1h4" /></svg>
            <svg style={{ marginTop: 4 }} width="16" height="14" viewBox="0 0 16 14" fill="none" stroke="#ddd"><path d="M1 5v4h2l4 3V2L3 5zM9 5q2 2 0 4M11 3q3 4 0 8M13 1q4 6 0 12" /></svg>
            <span />
          </TrayIcons>
          <Clock>11:25<br />martes<br />05/05/2020</Clock>
          <Notify>
            <svg width="16" height="15" viewBox="0 0 16 15" fill="none" stroke="#eee"><path d="M1 1h14v10H10l-2 2-2-2H1z" /></svg>
          </Notify>
        </Tray>
      </Taskbar>
    </Page>
  );
}
